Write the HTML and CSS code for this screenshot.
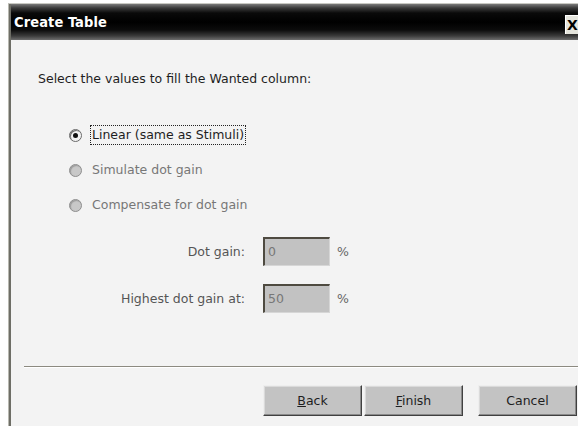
FILE: index.html
```html
<!DOCTYPE html>
<html>
<head>
<meta charset="utf-8">
<link rel="stylesheet" href="styles.css">
</head>
<body>
<div class="window">
  <div class="titlebar">
    <span class="title">Create Table</span>
    <span class="close">X</span>
  </div>
  <div class="content">
    <p class="prompt">Select the values to fill the Wanted column:</p>
    <div class="options">
      <label class="option checked"><span class="radio"></span><span class="text focus">Linear (same as Stimuli)</span></label>
      <label class="option disabled"><span class="radio"></span><span class="text">Simulate dot gain</span></label>
      <label class="option disabled"><span class="radio"></span><span class="text">Compensate for dot gain</span></label>
    </div>
    <div class="fields">
      <span class="flabel">Dot gain:</span><span class="input">0</span><span class="unit">%</span>
      <span class="flabel">Highest dot gain at:</span><span class="input">50</span><span class="unit">%</span>
    </div>
    <div class="separator"></div>
    <div class="buttons">
      <button class="btn"><u>B</u>ack</button>
      <button class="btn"><u>F</u>inish</button>
      <button class="btn cancel">Cancel</button>
    </div>
  </div>
</div>
</body>
</html>
```
FILE: styles.css
```css
html, body {
  margin: 0;
  padding: 0;
  background: #ffffff;
  height: 100%;
}
body {
  font-family: "DejaVu Sans", Verdana, sans-serif;
  font-size: 12.5px;
  color: #1e1e1e;
  overflow: hidden;
}
.window {
  margin: 3px 0 0 8px;
  height: 423px;
  border-top: 1px solid #c9c9c3;
  border-left: 1px solid #b8b8b0;
  display: flex;
  flex-direction: column;
}
.titlebar {
  height: 36px;
  flex: none;
  background: linear-gradient(#7a7a7a 0px, #3a3a3a 4px, #0a0a0a 9px, #000 18px, #0c0c0c 26px, #3c3c3c 32px, #6e6e6e 36px);
  display: flex;
  align-items: center;
  justify-content: space-between;
  border-left: 2px solid #6e6e66;
}
.title {
  font-family: "DejaVu Sans Condensed", "DejaVu Sans", sans-serif;
  font-weight: bold;
  font-size: 14.5px;
  color: #ffffff;
  padding-left: 3px;
  letter-spacing: 0.1px;
}
.close {
  width: 11px;
  height: 18px;
  background: #e4e4dc;
  border-top: 1px solid #ffffff;
  border-left: 1px solid #ffffff;
  color: #000;
  font-weight: bold;
  font-size: 14px;
  line-height: 18px;
  padding-left: 1px;
  overflow: hidden;
  margin-top: 4px;
}
.content {
  flex: 1;
  background: #f3f3f3;
  border-left: 2px solid #6e6e66;
  display: flex;
  flex-direction: column;
}
.prompt {
  margin: 32px 0 0 27px;
  line-height: 14px;
}
.options {
  margin: 39px 0 0 58px;
  display: flex;
  flex-direction: column;
  gap: 15px;
}
.option {
  display: flex;
  align-items: center;
  height: 20px;
}
.radio {
  width: 11px;
  height: 11px;
  border-radius: 50%;
  border: 1px solid #8e8e8e;
  background: #c8c8c8;
  box-shadow: inset 1px 1px 1px #9a9a9a;
  margin-right: 9px;
  position: relative;
}
.checked .radio {
  background: #f4f4f4;
  border-color: #6a6a6a;
  box-shadow: inset 1px 1px 0 #707070;
}
.checked .radio::after {
  content: "";
  position: absolute;
  left: 3px;
  top: 3px;
  width: 5px;
  height: 5px;
  border-radius: 50%;
  background: #111;
}
.text {
  padding: 2px 1px;
  line-height: 14px;
}
.focus {
  outline: 1px dotted #222;
  outline-offset: 0;
}
.disabled .text {
  color: #777777;
}
.fields {
  margin: 22px 0 0 0;
  display: grid;
  grid-template-columns: 245px 67px auto;
  column-gap: 7px;
  row-gap: 18px;
  align-items: center;
}
.flabel {
  text-align: right;
  color: #555;
  padding-right: 11px;
}
.input {
  box-sizing: border-box;
  height: 29px;
  width: 67px;
  background: #c2c2c2;
  border-top: 2px solid #4e4a40;
  border-left: 2px solid #4e4a40;
  border-right: 1px solid #d6d6d6;
  border-bottom: 1px solid #d6d6d6;
  color: #777;
  padding: 6px 0 0 3px;
  line-height: 14px;
}
.unit {
  color: #666;
}
.separator {
  margin: 53px 0 0 13px;
  height: 1px;
  background: #8c8a80;
  border-bottom: 1px solid #ffffff;
}
.buttons {
  margin: 17px 0 0 252px;
  display: flex;
}
.btn {
  box-sizing: border-box;
  width: 99px;
  height: 31px;
  font-family: inherit;
  font-size: 12.5px;
  color: #1e1e1e;
  background: #c3c3c3;
  border: 1px solid;
  border-color: #eeeeee #404040 #404040 #eeeeee;
  box-shadow: inset -1px -1px 0 #8a8a8a, inset 1px 1px 0 #dadada;
  padding: 0;
  margin-right: 2px;
}
.btn.cancel {
  margin-left: 13px;
  margin-right: 0;
}
.btn u {
  text-decoration: underline;
}
```
